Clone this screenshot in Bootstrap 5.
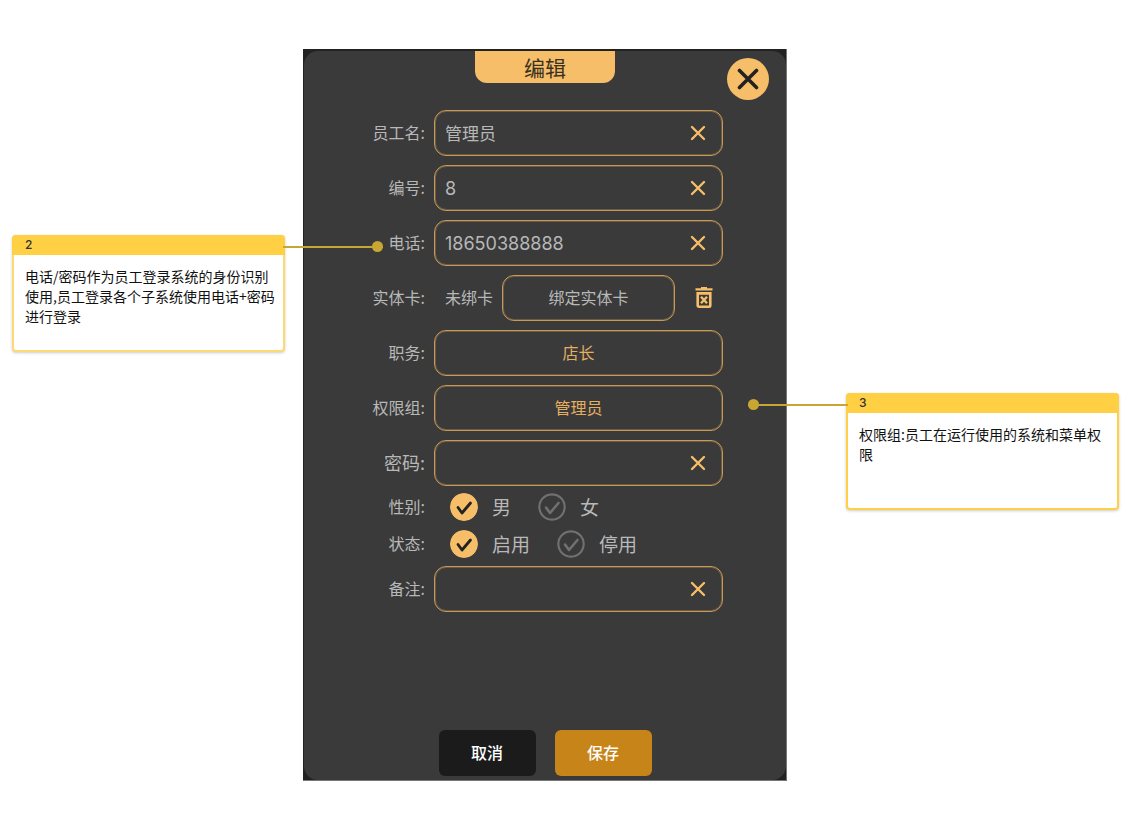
<!DOCTYPE html>
<html lang="zh-CN">
<head>
<meta charset="utf-8">
<meta name="viewport" content="width=device-width, initial-scale=1">
<title>编辑员工</title>
<link rel="stylesheet" href="https://cdn.jsdelivr.net/npm/bootstrap@5.3.0/dist/css/bootstrap.min.css">
<style>
  :root { --amber: #f6be68; --amber-line: #c99a56; --panel: #3a3a3a; --soft: #b8b8b8; }
  body { font-family: "Noto Sans CJK SC", sans-serif; background: #fff; }
  .board { display: grid; grid-template-columns: minmax(0, 291fr) minmax(440px, 484fr) minmax(0, 332fr);
    min-height: 100vh; padding: 49px 15px 44px 12px; }

  /* Annotation notes */
  .note { min-height: 117px; background: #fff; border: 2px solid #fddb72; border-radius: 4px;
    box-shadow: 0 1px 3px rgba(0,0,0,.2); color: #111; }
  .note-start { margin: 186px 18px 0 0; }
  .note-end { margin: 344px 0 0 59px; border-color: #ffd044; }
  .note-title { height: 20px; margin: -2px -2px 0; padding-left: 13px; border-radius: 4px 4px 0 0;
    background: #ffd044; color: #333; font: 500 12px/20px Inter, sans-serif; }
  .note-text { margin: 0; padding: 11px 5px 0 11px; font-size: 14px; line-height: 20px; }
  .wire { position: absolute; top: 9px; width: 100px; height: 2px; background: #c9a632; z-index: 2; }
  .wire::after { content: ""; position: absolute; top: -5px; width: 11px; height: 11px; border-radius: 50%; background: #c9a632; }
  .note-start .wire { left: 100%; }
  .note-start .wire::after { right: 0; }
  .note-end .wire { right: 100%; }
  .note-end .wire::after { left: 0; }

  /* Edit dialog */
  .frame { min-width: 0; background: #222; border: solid #777; border-width: 0 1px 1px 0; padding: 2px 0 0 1px; }
  .panel { min-width: 0; background: var(--panel); border-radius: 14px; color: var(--soft); }
  .panel-head { display: grid; grid-template-columns: 1fr 140px 1fr; }
  .panel-title { grid-column: 2; height: 32px; margin: 0; border-radius: 0 0 12px 12px; background: var(--amber); color: #3a3122;
    font-size: 21px; font-weight: 400; line-height: 32px; }
  .close-round { width: 42px; height: 42px; margin: 7px 17px 0 0; background: var(--amber); }
  .fields { margin-top: 10px; padding-right: 63px; }
  .stack { display: flex; flex-direction: column; gap: 9px; }
  .options { margin: 7px 0 8px; }
  .line { display: flex; align-items: center; gap: 9px; }
  .caption { flex: 0 0 121px; padding-bottom: 2px; text-align: right; font-size: 16px; line-height: 24px; }
  .caption-lg { font-size: 18px; }
  .box { flex: 1 1 0; min-width: 0; height: 46px; border: 1px solid var(--amber-line); border-radius: 12px; background: transparent;
    box-shadow: inset 0 0 0 1px rgba(246,190,104,.25); }
  .box input { flex: 1 1 0; min-width: 0; padding: 0 0 0 10px; border: 0; outline: 0; background: transparent; color: var(--soft);
    font-family: "Noto Sans CJK SC", sans-serif; font-size: 17px; }
  .box input.digits { font-family: Inter, sans-serif; font-size: 18px; }
  .plain { border: 0; padding: 0; background: transparent; line-height: 0; }
  .clear { width: 48px; height: 44px; }
  .pick { color: #e6ae60; font-size: 16px; padding: 0 0 3px; }
  .bind { color: var(--soft); font-size: 16px; padding: 0 0 3px; }
  .unbound { padding: 0 0 2px 11px; font-size: 16px; }
  .trash { margin: 0 10px 0 11px; }
  .choice { display: flex; align-items: center; gap: 14px; height: 28px; font-size: 19px; line-height: 28px; }
  .choice input { appearance: none; width: 28px; height: 28px; margin: 0; border-radius: 50%;
    background: url("data:image/svg+xml,%3Csvg xmlns='http://www.w3.org/2000/svg' viewBox='0 0 28 28' fill='none' stroke='%23707070' stroke-width='2.2'%3E%3Ccircle cx='14' cy='14' r='12.7'/%3E%3Cpath d='M8 14.5l4 5.5 8.5-10' stroke-width='2.6' stroke-linecap='round' stroke-linejoin='round'/%3E%3C/svg%3E") center/28px no-repeat; }
  .choice input:checked { background-image: url("data:image/svg+xml,%3Csvg xmlns='http://www.w3.org/2000/svg' viewBox='0 0 28 28' fill='none'%3E%3Ccircle cx='14' cy='14' r='14' fill='%23f6be68'/%3E%3Cpath d='M8 14.5l4 5.5 8.5-10' stroke='%23222' stroke-width='2.8' stroke-linecap='round' stroke-linejoin='round'/%3E%3C/svg%3E"); }
  .choices { display: flex; gap: 27px; padding-left: 16px; }
  .actions { display: flex; justify-content: center; gap: 19px; margin: auto 0 4px; }
  .actions .btn { width: 97px; height: 46px; padding: 0 0 3px; border: 0; border-radius: 6px; color: #fff; font-size: 16px; font-weight: 500; }
  .actions .act-cancel { background: #1b1b1b; }
  .actions .act-save { background: #c78418; }
</style>
</head>
<body>
<svg class="d-none">
  <symbol id="cross" viewBox="0 0 16 16"><path d="M2 2l12 12M14 2L2 14" fill="none" stroke="#f6be68" stroke-width="2.4" stroke-linecap="round"/></symbol>
</svg>
<main class="board">
  <div>
    <aside class="note note-start position-relative">
      <div class="note-title">2</div>
      <p class="note-text">电话/密码作为员工登录系统的身份识别使用,员工登录各个子系统使用电话+密码进行登录</p>
      <span class="wire"></span>
    </aside>
  </div>

  <section class="frame d-flex">
    <form class="panel d-flex flex-column flex-grow-1">
      <header class="panel-head">
        <h1 class="panel-title text-center">编辑</h1>
        <button type="button" class="close-round btn rounded-circle p-0 border-0 d-flex align-items-center justify-content-center ms-auto" aria-label="关闭">
          <svg width="22" height="22" viewBox="0 0 22 22"><path d="M2.5 2.5l17 17M19.5 2.5l-17 17" stroke="#222" stroke-width="3.6" stroke-linecap="round"/></svg>
        </button>
      </header>

      <div class="fields">
        <div class="stack">
          <div class="line">
            <label class="caption" for="name">员工名:</label>
            <div class="box d-flex"><input id="name" type="text" value="管理员"><button type="button" class="plain clear" aria-label="清除员工名"><svg width="16" height="16"><use href="#cross"/></svg></button></div>
          </div>
          <div class="line">
            <label class="caption" for="code">编号:</label>
            <div class="box d-flex"><input id="code" type="text" class="digits" value="8"><button type="button" class="plain clear" aria-label="清除编号"><svg width="16" height="16"><use href="#cross"/></svg></button></div>
          </div>
          <div class="line">
            <label class="caption" for="phone">电话:</label>
            <div class="box d-flex"><input id="phone" type="tel" class="digits" value="18650388888"><button type="button" class="plain clear" aria-label="清除电话"><svg width="16" height="16"><use href="#cross"/></svg></button></div>
          </div>
          <div class="line">
            <label class="caption" for="bind">实体卡:</label>
            <span class="unbound">未绑卡</span>
            <button id="bind" type="button" class="box bind">绑定实体卡</button>
            <button type="button" class="plain trash" aria-label="删除实体卡">
              <svg width="18" height="22" viewBox="0 0 18 22" fill="none" stroke="#f6be68"><path d="M.5 2.4h17M6 1.2h6" stroke-width="2.4"/><path d="M2.7 6.4h12.6v12.2a1.2 1.2 0 0 1-1.2 1.2H3.9a1.2 1.2 0 0 1-1.2-1.2z" stroke-width="2.6"/><path d="M6 9.8l6 6.4M12 9.8l-6 6.4" stroke-width="2.4"/></svg>
            </button>
          </div>
          <div class="line">
            <label class="caption" for="post">职务:</label>
            <button id="post" type="button" class="box pick">店长</button>
          </div>
          <div class="line">
            <label class="caption" for="group">权限组:</label>
            <button id="group" type="button" class="box pick">管理员</button>
          </div>
          <div class="line">
            <label class="caption caption-lg" for="pass">密码:</label>
            <div class="box d-flex"><input id="pass" type="password"><button type="button" class="plain clear" aria-label="清除密码"><svg width="16" height="16"><use href="#cross"/></svg></button></div>
          </div>
        </div>

        <div class="stack options">
          <div class="line" role="radiogroup" aria-labelledby="sex">
            <span class="caption" id="sex">性别:</span>
            <div class="choices"><label class="choice"><input type="radio" name="sex" checked>男</label><label class="choice"><input type="radio" name="sex">女</label></div>
          </div>
          <div class="line" role="radiogroup" aria-labelledby="state">
            <span class="caption" id="state">状态:</span>
            <div class="choices"><label class="choice"><input type="radio" name="state" checked>启用</label><label class="choice"><input type="radio" name="state">停用</label></div>
          </div>
        </div>

        <div class="line">
          <label class="caption" for="remark">备注:</label>
          <div class="box d-flex"><input id="remark" type="text"><button type="button" class="plain clear" aria-label="清除备注"><svg width="16" height="16"><use href="#cross"/></svg></button></div>
        </div>
      </div>

      <div class="actions">
        <button type="button" class="btn act-cancel">取消</button>
        <button type="submit" class="btn act-save">保存</button>
      </div>
    </form>
  </section>

  <div>
    <aside class="note note-end position-relative">
      <div class="note-title">3</div>
      <p class="note-text">权限组:员工在运行使用的系统和菜单权限</p>
      <span class="wire"></span>
    </aside>
  </div>
</main>
<script src="https://cdn.jsdelivr.net/npm/bootstrap@5.3.0/dist/js/bootstrap.bundle.min.js"></script>
</body>
</html>
